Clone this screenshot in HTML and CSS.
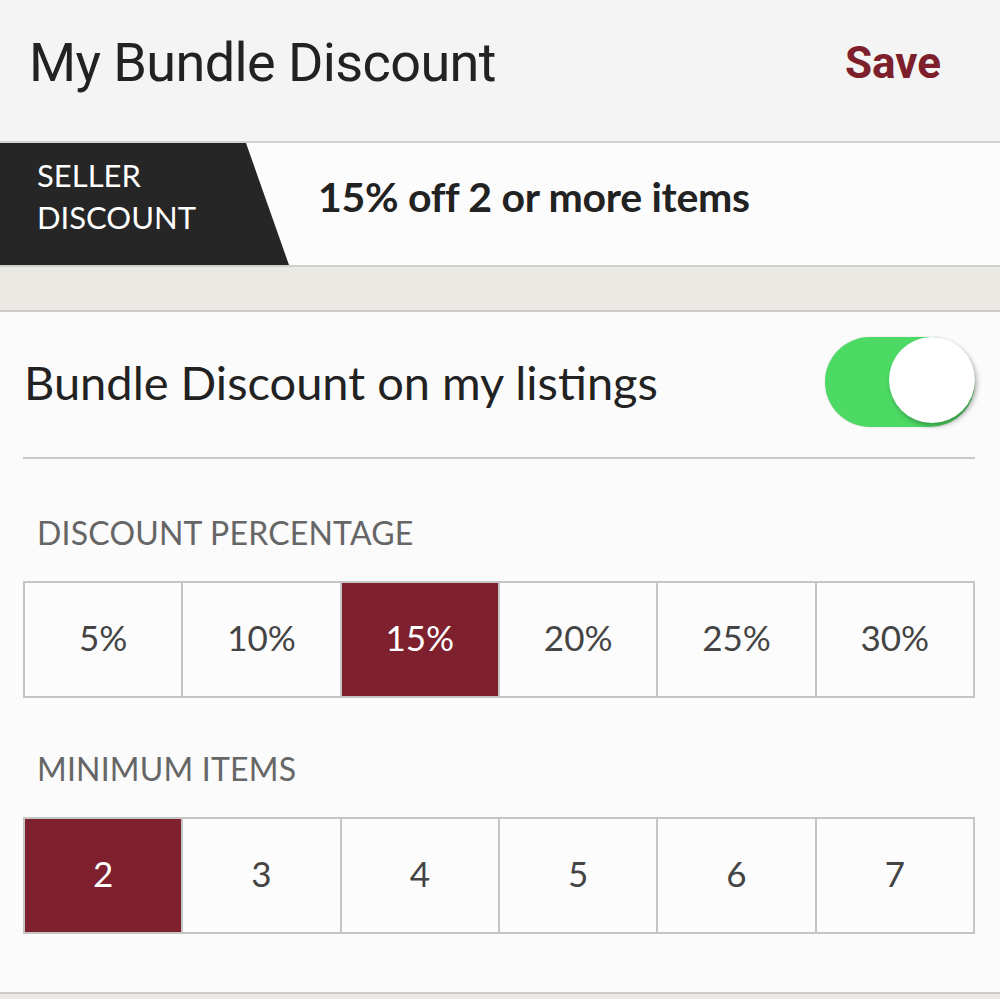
FILE: index.html
```html
<!DOCTYPE html>
<html>
<head>
<meta charset="utf-8">
<link rel="stylesheet" href="styles.css">
</head>
<body>
<div class="page">
  <header class="appbar">
    <div class="title">My Bundle Discount</div>
    <div class="save">Save</div>
  </header>
  <div class="seller-row">
    <div class="badge"><span>SELLER<br>DISCOUNT</span></div>
    <div class="summary">15% off 2 or more items</div>
  </div>
  <div class="band"></div>
  <main class="content">
    <div class="toggle-row">
      <div class="toggle-label">Bundle Discount on my listings</div>
      <div class="toggle"><div class="knob"></div></div>
    </div>
    <div class="section-label">DISCOUNT PERCENTAGE</div>
    <div class="options">
      <div class="opt">5%</div>
      <div class="opt">10%</div>
      <div class="opt selected">15%</div>
      <div class="opt">20%</div>
      <div class="opt">25%</div>
      <div class="opt">30%</div>
    </div>
    <div class="section-label second">MINIMUM ITEMS</div>
    <div class="options">
      <div class="opt selected">2</div>
      <div class="opt">3</div>
      <div class="opt">4</div>
      <div class="opt">5</div>
      <div class="opt">6</div>
      <div class="opt">7</div>
    </div>
  </main>
  <div class="footer-band"></div>
</div>
</body>
</html>
```
FILE: styles.css
```css
html, body {
  margin: 0;
  padding: 0;
}
body {
  width: 1000px;
  height: 999px;
  overflow: hidden;
  background: #fbfbfb;
  font-family: Lato, "Noto Sans", sans-serif;
}
.page {
  display: flex;
  flex-direction: column;
  height: 999px;
}
.appbar {
  flex: none;
  background: #f5f4f4;
  border-bottom: 2px solid #d2d1cf;
  display: flex;
  align-items: center;
  justify-content: space-between;
  padding: 0 59px 0 29px;
  box-sizing: border-box;
  height: 143px;
}
.title {
  font-family: Roboto, sans-serif;
  font-size: 54px;
  color: #222;
  letter-spacing: -0.6px;
  margin-top: -16px;
}
.save {
  font-family: Roboto, sans-serif;
  font-weight: 700;
  font-size: 44px;
  color: #7e1f2c;
  margin-top: -16px;
}
.seller-row {
  height: 122px;
  flex: none;
  display: flex;
  align-items: center;
  background: #fcfcfc;
  border-bottom: 2px solid #cfcecb;
}
.badge {
  width: 289px;
  height: 100%;
  background: #262626;
  clip-path: polygon(0 0, 246px 0, 100% 100%, 0 100%);
  display: flex;
  align-items: center;
  padding-left: 37px;
  padding-bottom: 16px;
  box-sizing: border-box;
  color: #fff;
  font-size: 31px;
  line-height: 42px;
}
.summary {
  margin-left: 29px;
  margin-top: -16px;
  font-size: 41px;
  font-weight: 700;
  color: #222;
  letter-spacing: -0.3px;
}
.band {
  height: 43px;
  flex: none;
  background: #ebe9e4;
  border-bottom: 2px solid #cdccc8;
}
.content {
  flex: 1;
  padding: 0 25px 0 23px;
  background: #fbfbfb;
}
.toggle-row {
  display: flex;
  align-items: center;
  justify-content: space-between;
  border-bottom: 2px solid #c9c9c7;
  box-sizing: border-box;
  height: 147px;
}
.toggle-label {
  font-size: 47px;
  color: #222;
  padding-left: 1px;
  margin-top: -6px;
}
.toggle {
  width: 150px;
  height: 90px;
  border-radius: 45px;
  background: #4cd964;
  position: relative;
  margin-top: -6px;
  box-shadow: 0 0 2px rgba(0,0,0,0.15);
}
.knob {
  position: absolute;
  right: 0;
  top: 0;
  width: 86px;
  height: 86px;
  border-radius: 50%;
  background: #fff;
  box-shadow: 2px 3px 5px rgba(0,0,0,0.3);
}
.section-label {
  margin-top: 56px;
  padding-left: 14px;
  font-size: 32px;
  color: #666;
  letter-spacing: 0.2px;
  line-height: 36px;
}
.section-label.second {
  margin-top: 53px;
}
.options {
  margin-top: 30px;
  display: grid;
  grid-template-columns: repeat(6, 1fr);
  border-top: 2px solid #c5c5c1;
  border-left: 2px solid #c5c5c1;
  height: 117px;
  box-sizing: border-box;
}
.opt {
  border-right: 2px solid #c5c5c1;
  border-bottom: 2px solid #c5c5c1;
  display: flex;
  align-items: center;
  justify-content: center;
  font-size: 35px;
  color: #444;
  background: #fcfcfc;
  padding-bottom: 6px;
}
.opt.selected {
  background: #7e202d;
  color: #fff;
}
.footer-band {
  height: 5px;
  flex: none;
  background: #ebe9e4;
  border-top: 2px solid #cdccc8;
}
```
